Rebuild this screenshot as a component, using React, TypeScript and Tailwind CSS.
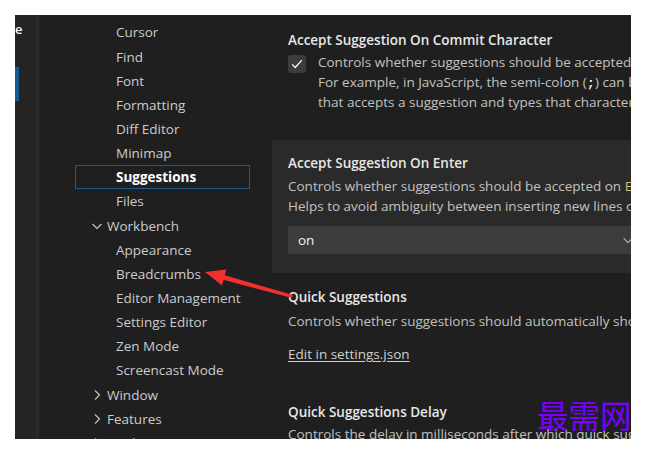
import React from "react";

type Item = { label: string; level: 1 | 2; chevron?: "down" | "right"; selected?: boolean };

const items: Item[] = [
  { label: "Cursor", level: 2 },
  { label: "Find", level: 2 },
  { label: "Font", level: 2 },
  { label: "Formatting", level: 2 },
  { label: "Diff Editor", level: 2 },
  { label: "Minimap", level: 2 },
  { label: "Suggestions", level: 2, selected: true },
  { label: "Files", level: 2 },
  { label: "Workbench", level: 1, chevron: "down" },
  { label: "Appearance", level: 2 },
  { label: "Breadcrumbs", level: 2 },
  { label: "Editor Management", level: 2 },
  { label: "Settings Editor", level: 2 },
  { label: "Zen Mode", level: 2 },
  { label: "Screencast Mode", level: 2 },
  { label: "Window", level: 1, chevron: "right" },
  { label: "Features", level: 1, chevron: "right" },
  { label: "Application", level: 1, chevron: "right" },
];

function Chevron({ dir }: { dir: "down" | "right" }) {
  return (
    <svg width="16" height="16" viewBox="0 0 16 16" className="shrink-0">
      {dir === "down" ? (
        <polyline points="3.5,6 8,10.5 12.5,6" fill="none" stroke="#c5c5c5" strokeWidth="1.2" />
      ) : (
        <polyline points="6,3.5 10.5,8 6,12.5" fill="none" stroke="#c5c5c5" strokeWidth="1.2" />
      )}
    </svg>
  );
}

function TreeRow({ item }: { item: Item }) {
  if (item.level === 1) {
    return (
      <div className="h-[24.15px] flex items-center pl-[14px] gap-[2px] text-[#cccccc] whitespace-nowrap">
        <Chevron dir={item.chevron!} />
        <span>{item.label}</span>
      </div>
    );
  }
  return (
    <div
      className={
        item.selected
          ? "h-[24.15px] flex items-center pl-[40px] border border-[#1d5a8e] text-white font-bold whitespace-nowrap"
          : "h-[24.15px] flex items-center pl-[41px] text-[#cccccc] whitespace-nowrap"
      }
    >
      {item.label}
    </div>
  );
}

function Title({ children }: { children: React.ReactNode }) {
  return <div className="h-[20px] leading-[20px] font-semibold text-[#e7e7e7] whitespace-nowrap">{children}</div>;
}

function Desc({ children }: { children: React.ReactNode }) {
  return <div className="h-[20px] leading-[20px] text-[#c2c2c2] whitespace-nowrap">{children}</div>;
}

export default function App() {
  return (
    <div className="relative w-[650px] h-[449px] bg-white overflow-hidden font-['Open_Sans',sans-serif] text-[13.5px]">
      <div className="ml-[15px] mt-[15px] w-[616px] h-[424px] flex bg-[#1f1f1f] overflow-hidden">
        {/* left strip */}
        <div className="w-[21px] shrink-0 bg-[#242424] flex flex-col">
          <div className="h-[23px] pt-[7px] text-[13px] leading-[14px] text-white font-semibold">e</div>
          <div className="mt-[29px] w-[4px] h-[34px] bg-[#17598d]" />
        </div>
        <div className="w-[3px] shrink-0 bg-[#2a2a2a]" />
        {/* tree */}
        <div className="w-[233px] shrink-0 pt-[5.5px] pl-[36px] pr-[22px]">
          {items.map((it) => (
            <TreeRow key={it.label} item={it} />
          ))}
        </div>
        {/* content */}
        <div className="flex-1 min-w-0 overflow-hidden">
          <section className="h-[125px] pt-[15px] pl-[16px]">
            <Title>Accept Suggestion On Commit Character</Title>
            <div className="flex mt-[2px] gap-[12px]">
              <div className="mt-[3px] w-[18px] h-[18px] shrink-0 rounded-[3px] bg-[#3c3c3c] flex items-center justify-center">
                <svg width="14" height="14" viewBox="0 0 16 16">
                  <polyline points="2.5,8.5 6,12 13.5,3.5" fill="none" stroke="#ffffff" strokeWidth="1.4" />
                </svg>
              </div>
              <div>
                <Desc>Controls whether suggestions should be accepted on commit characters.</Desc>
                <Desc>
                  For example, in JavaScript, the semi-colon (<span className="font-['Liberation_Mono',monospace] font-bold text-[#e7e7e7]">;</span>) can be a commit character
                </Desc>
                <Desc>that accepts a suggestion and types that character.</Desc>
              </div>
            </div>
          </section>
          <section className="h-[133px] pt-[13px] pl-[16px] bg-[#2a2a2a]">
            <Title>Accept Suggestion On Enter</Title>
            <div className="mt-[3px]">
              <Desc>
                Controls whether suggestions should be accepted on <span className="text-[#d7ba7d]">Enter</span> in addition to Tab.
              </Desc>
              <Desc>Helps to avoid ambiguity between inserting new lines or accepting suggestions.</Desc>
            </div>
            <div className="mt-[10px] -mr-[4px] h-[28px] bg-[#3c3c3c] flex items-center justify-between pl-[10px] pr-0">
              <span className="text-[#f0f0f0]">on</span>
              <svg width="14" height="14" viewBox="0 0 16 16">
                <polyline points="3,6 8,11 13,6" fill="none" stroke="#c5c5c5" strokeWidth="1.2" />
              </svg>
            </div>
          </section>
          <section className="pt-[14px] pl-[16px]">
            <Title>Quick Suggestions</Title>
            <div className="mt-[4px]">
              <Desc>Controls whether suggestions should automatically show up while typing.</Desc>
            </div>
            <div className="mt-[13px] h-[20px] leading-[20px] text-[#d0d0d0] underline underline-offset-2 whitespace-nowrap">
              Edit in settings.json
            </div>
            <div className="mt-[38px]">
              <Title>Quick Suggestions Delay</Title>
            </div>
            <div className="mt-[2px]">
              <Desc>Controls the delay in milliseconds after which quick suggestions will show up.</Desc>
            </div>
          </section>
        </div>
      </div>

      {/* red annotation arrow */}
      <svg className="absolute left-0 top-0 pointer-events-none" width="650" height="449" viewBox="0 0 650 449">
        <polygon points="222,274.5 224,280 292,298 293,295" fill="#ee3030" />
        <polygon points="205,272 226.5,269.5 222,285.5" fill="#ee3030" />
      </svg>

      {/* watermark */}
      <div className="absolute left-[537px] top-[399px] text-[31.5px] leading-none text-[#7a00ff] font-['Noto_Sans_CJK_SC',sans-serif] pointer-events-none">
        最需网
      </div>
    </div>
  );
}
